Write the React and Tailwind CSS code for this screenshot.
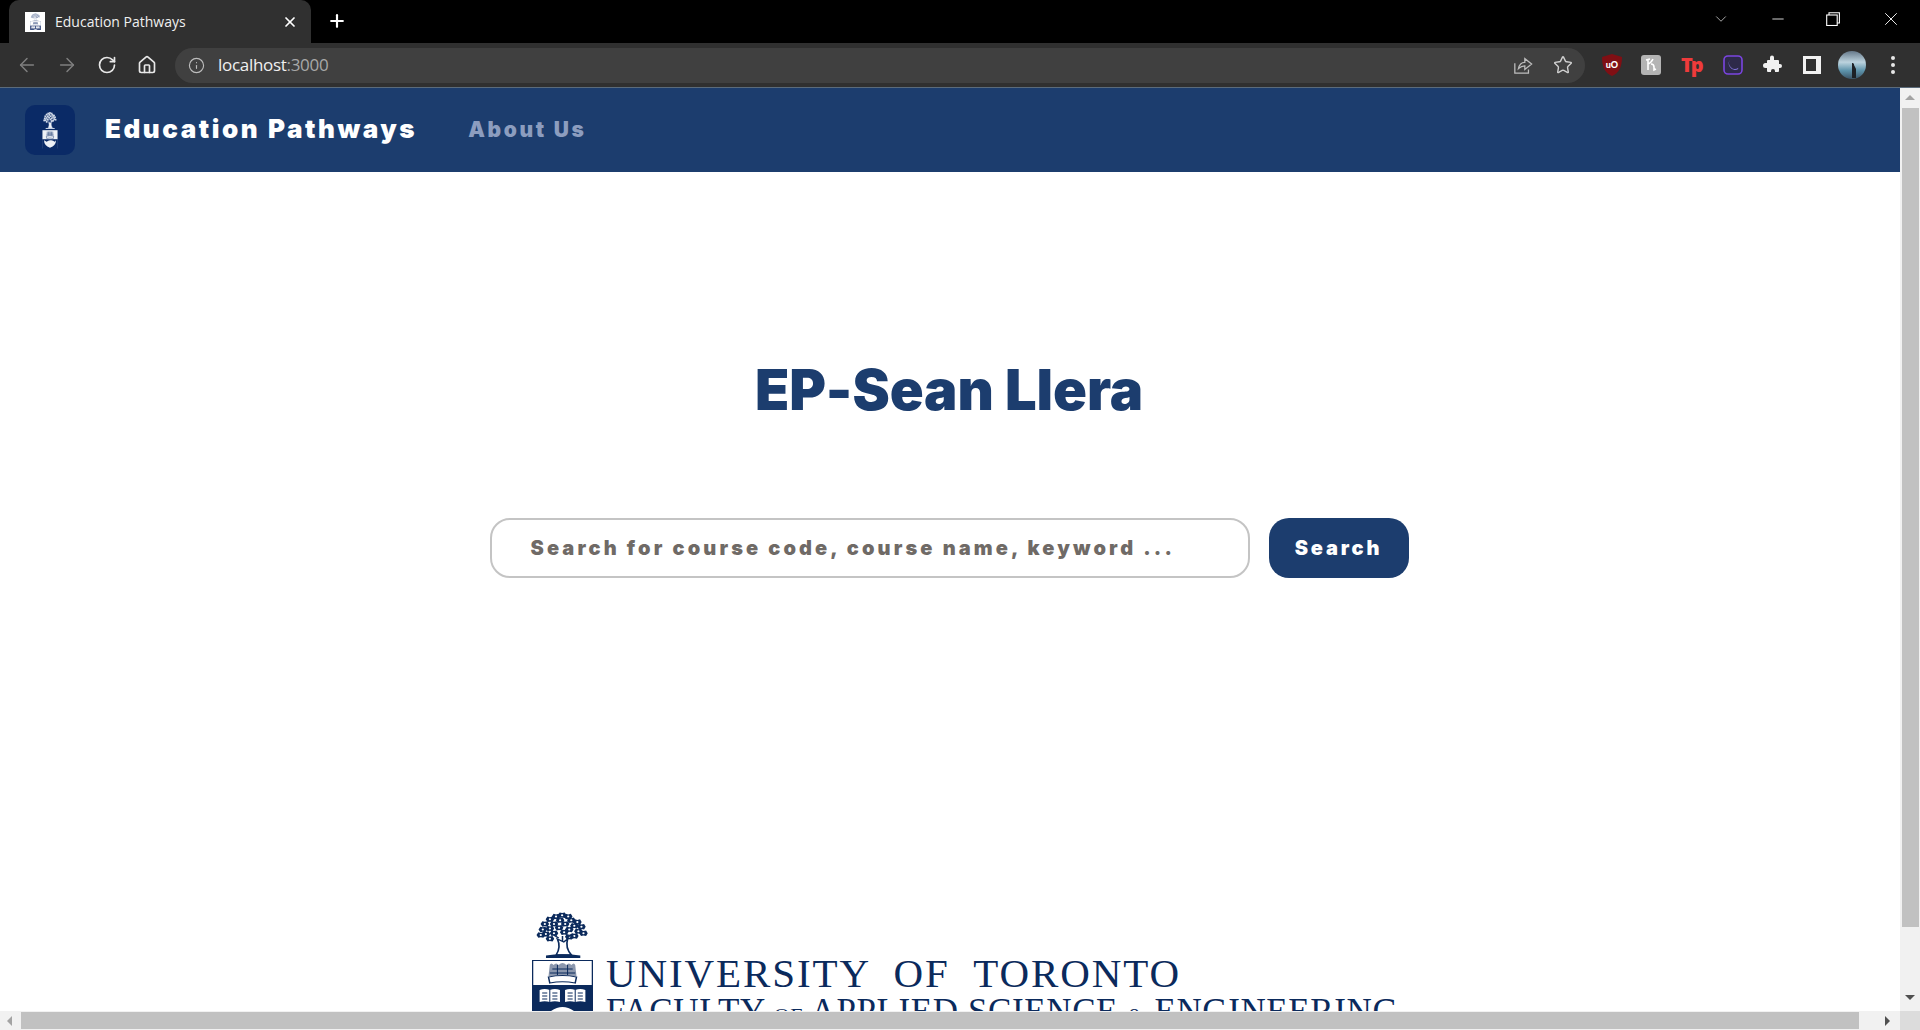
import React from "react";
import { ArrowLeft, ArrowRight, RotateCw, Home, Info, Star, X, Plus, ChevronDown, Minus } from "lucide-react";

function Crest({ tree = "#0b2a5c", top = "#ffffff", bottom = "#0b2a5c", line = "#0b2a5c", mid = "#8b97ad", emblem = "books", className = "" }) {
  const leaves = [[24,3.5],[18,5],[30,5],[12,8],[22,9],[33,9],[39,11],[7,13],[16,13],[27,13],[36,15],[43,16],[5,19],[12,18],[21,17],[31,19],[40,21],[8,24],[16,23],[26,22],[36,26],[45,23],[3,25],[12,29],[31,27]];
  return (
    <svg viewBox="0 0 48 101" preserveAspectRatio="none" className={className}>
      <g transform="translate(4.5 2) scale(0.8 0.92)">
        {leaves.map(([x, y], i) => (
          <g key={i}>
            <path d={`M${x - 4.2} ${y} l1.8 -3 l2.4 0.7 l2.6 -0.7 l1.6 3 l-1.6 3 l-2.6 -0.5 l-2.4 0.5 Z`} fill={tree} />
            <circle cx={x} cy={y} r="1.1" fill={top} />
          </g>
        ))}
      </g>
      <path d="M21 28 L17 25 M27 28 L32 24 M24 26 V31" stroke={tree} strokeWidth="1.2" fill="none" />
      <path d="M20 29 Q23 37 19 45 H31 Q26 38 28 29 L25 32 Z" fill={top} stroke={tree} strokeWidth="1.3" />
      <path d="M11 45.5 Q24 43 38 45.5 V48 H11 Z" fill={tree} />
      <rect x="0.5" y="50.5" width="47" height="50" fill={top} stroke={line} />
      <rect x="0.5" y="75" width="47" height="26" fill={bottom} />
      <path d="M14 55 Q15 52 17 55 Q19 52 21 55 Q24 51 27 55 Q29 52 31 55 Q33 52 34 55 L35 66 H13 Z" fill={mid} />
      <path d="M14 63 H34 M16 59 H32 M20 55 V65 M28 55 V65" stroke={line} strokeWidth="0.8" />
      <path d="M13 67 Q24 64 35 67 L34 73 Q24 70.5 14 73 Z" fill={top} stroke={line} strokeWidth="1.2" />
      {emblem === "books" ? (
        <>
          <path d="M6 80 Q10 78 14 80 Q18 78 22 80 V92 Q18 90.5 14 92 Q10 90.5 6 92 Z M26 80 Q30 78 34 80 Q38 78 42 80 V92 Q38 90.5 34 92 Q30 90.5 26 92 Z" fill={top} />
          <path d="M14 80 V92 M8 83 H12 M8 86 H12 M8 89 H12 M16 83 H20 M16 86 H20 M16 89 H20 M34 80 V92 M28 83 H32 M28 86 H32 M28 89 H32 M36 83 H40 M36 86 H40 M36 89 H40" stroke={line} strokeWidth="0.8" />
          <path d="M15 101 Q24 93 33 101 Z" fill={top} />
        </>
      ) : (
        <path d="M6 78 Q6 92 24 98 Q42 92 42 78 L38 82 Q34 78 28 78 Q20 76 14 82 Z" fill={top} />
      )}
    </svg>
  );
}

function Nav() {
  return (
    <nav className="flex h-[84px] shrink-0 items-center bg-[#1c3d6e] pl-[25px]">
      <div className="flex h-[50px] w-[50px] items-center justify-center rounded-[10px] bg-[#0a2a66]">
        <Crest tree="#c5d0e2" top="#eef1f6" bottom="#0a2a66" line="#0a2a66" mid="#aab6cc" emblem="hands" className="h-[38px] w-[16px]" />
      </div>
      <span className="ml-[30px] mt-[-3px] whitespace-nowrap text-[26px] font-black tracking-[2.55px] text-white">Education Pathways</span>
      <span className="ml-[51px] whitespace-nowrap text-[21px] font-black tracking-[2.65px] text-[#8c9dbf]">About Us</span>
    </nav>
  );
}

function Page() {
  return (
    <main className="flex min-h-0 flex-1 flex-col overflow-hidden bg-white">
      <Nav />
      <div className="mr-[2px] flex flex-col items-center">
        <h1 className="mt-[184px] text-[56px] font-black leading-[68px] tracking-[-0.05px] text-[#1c3d6e]">EP-Sean Llera</h1>
        <div className="mt-[94px] flex gap-[19px]">
          <div className="flex h-[60px] w-[760px] items-center rounded-[20px] border-2 border-[#c4c4c4] pl-[39px]">
            <span className="whitespace-nowrap text-[20px] font-black tracking-[3.1px] text-[#6f6a66]">Search for course code, course name, keyword ...</span>
          </div>
          <button className="h-[60px] w-[140px] rounded-[20px] bg-[#1c3d6e] text-[20px] font-black tracking-[2.8px] text-white">Search</button>
        </div>
      </div>
      <div className="ml-[532px] mt-[332px] flex h-[200px] items-start">
        <Crest className="h-[101px] w-[61px]" />
        <div className="ml-[13px] mt-[42px] font-['Liberation_Serif',serif] text-[#0b2a5c]">
          <div className="whitespace-nowrap text-[41px] leading-[42px] tracking-[1.9px] [word-spacing:12px]">UNIVERSITY OF TORONTO</div>
          <div className="mt-[-2px] whitespace-nowrap text-[35px] leading-[40px] tracking-[0.6px]">FACULTY <span className="text-[22px]">OF</span> APPLIED SCIENCE <span className="text-[22px]">&amp;</span> ENGINEERING</div>
        </div>
      </div>
    </main>
  );
}

function ExtIcons() {
  return (
    <div className="flex items-center">
      <svg viewBox="0 0 24 24" className="h-[24px] w-[24px]">
        <path d="M12 1 L22 4 C22 14 19 20 12 23 C5 20 2 14 2 4 Z" fill="#800f14" />
        <text x="12" y="15" textAnchor="middle" fontSize="9" fontWeight="900" fill="#fff" fontFamily="Lato, sans-serif">uO</text>
      </svg>
      <svg viewBox="0 0 20 20" className="ml-[17px] h-[20px] w-[20px]">
        <rect width="20" height="20" rx="3" fill="#b4b4b4" />
        <path d="M7 4 V15 M7 9 Q10 8 12 4 M5 5 L9 4 M10 9 Q13 9 13 12 V15 L15 14" stroke="#fff" strokeWidth="1.6" fill="none" />
      </svg>
      <span className="ml-[20px] text-[20px] font-black leading-none tracking-[-2px] text-[#ee3b3b]">Tp</span>
      <svg viewBox="0 0 20 20" className="ml-[21px] h-[20px] w-[20px]">
        <rect x="1" y="1" width="18" height="18" rx="4" fill="#2e2a4a" stroke="#7b45e0" strokeWidth="1.6" />
        <path d="M14.5 14.5 A6.5 6.5 0 0 1 7.5 4 A6 6 0 0 0 15.5 12.8 Q15 14 14.5 14.5 Z" fill="#8a7ae8" />
      </svg>
      <svg viewBox="0 0 20 20" className="ml-[19px] h-[20px] w-[20px]" fill="#f1f1f1">
        <path d="M8 2.5 a2 2 0 0 1 4 0 V5 h4 a1 1 0 0 1 1 1 v3 h1 a2 2 0 0 1 0 4 h-1 v3 a1 1 0 0 1 -1 1 h-3 v-1 a2 2 0 0 0 -4 0 v1 H6 a1 1 0 0 1 -1 -1 v-3 H3.5 a2.5 2.5 0 0 1 0 -5 H5 V6 a1 1 0 0 1 1 -1 h2 Z" />
      </svg>
      <div className="ml-[21px] flex h-[18px] w-[18px] justify-end border-[3px] border-[#f1f1f1] border-l-[2px] bg-[#f1f1f1]">
        <div className="h-full w-[10px] translate-x-[-2px] bg-[#303030]" />
      </div>
      <svg viewBox="0 0 28 28" className="ml-[17px] h-[28px] w-[28px]">
        <defs>
          <linearGradient id="av" x1="0" y1="0" x2="0" y2="1">
            <stop offset="0" stopColor="#66798a" />
            <stop offset="0.4" stopColor="#bcd3de" />
            <stop offset="0.7" stopColor="#5d93ab" />
            <stop offset="1" stopColor="#3c5568" />
          </linearGradient>
        </defs>
        <circle cx="14" cy="14" r="14" fill="url(#av)" />
        <path d="M14 12 a1.6 1.6 0 0 1 2 2 L18 18 V27 H14 Z" fill="#1d2126" />
      </svg>
      <div className="ml-[25px] flex flex-col gap-[3px]">
        <span className="h-[4px] w-[4px] rounded-full bg-[#e8e8e8]" />
        <span className="h-[4px] w-[4px] rounded-full bg-[#e8e8e8]" />
        <span className="h-[4px] w-[4px] rounded-full bg-[#e8e8e8]" />
      </div>
    </div>
  );
}

function Browser() {
  return (
    <>
      <div className="flex h-[43px] shrink-0 items-end bg-black pl-[9px] font-['Open_Sans',sans-serif]">
        <div className="flex h-[43px] w-[302px] items-center rounded-t-[10px] bg-[#303030] pl-[16px] pr-[13px]">
          <div className="flex h-[20px] w-[20px] items-center justify-center bg-white">
            <Crest tree="#8896b3" top="#ffffff" bottom="#3c4f80" line="#7585a8" mid="#9aa6bf" className="h-[17px] w-[11px]" />
          </div>
          <span className="ml-[10px] mt-[-1px] flex-1 whitespace-nowrap text-[14px] text-[#efefef]">Education Pathways</span>
          <X size={16} strokeWidth={2.6} className="text-white" />
        </div>
        <Plus size={20} strokeWidth={2.6} className="mb-[12px] ml-[16px] text-white" />
        <div className="mb-[13px] ml-auto flex items-center pr-[18px] text-white">
          <ChevronDown size={18} strokeWidth={1} className="mr-[39px] text-[#dddddd]" />
          <Minus size={18} strokeWidth={1.1} className="mr-[39px]" />
          <svg viewBox="0 0 14 14" className="mr-[40px] h-[14px] w-[14px]" fill="none" stroke="#fff" strokeWidth="1.1"><rect x="0.7" y="3" width="10.5" height="10.5" /><path d="M3 3 V0.7 H13.4 V11 H11.2" /></svg>
          <X size={22} strokeWidth={1} />
        </div>
      </div>
      <div className="flex h-[45px] shrink-0 items-center border-b border-[#5b6b7b] bg-[#303030] pl-[16px] pr-[15px] font-['Open_Sans',sans-serif]">
        <ArrowLeft size={22} strokeWidth={1.6} className="text-[#7f7f7f]" />
        <ArrowRight size={22} strokeWidth={1.6} className="ml-[18px] text-[#7f7f7f]" />
        <RotateCw size={20} strokeWidth={2} className="ml-[19px] text-[#e8e8e8]" />
        <Home size={20} strokeWidth={2} className="ml-[20px] text-[#e8e8e8]" />
        <div className="ml-[18px] flex h-[35px] w-[1410px] items-center rounded-full bg-[#404040] pl-[13px] pr-[12px]">
          <Info size={17} strokeWidth={1.6} className="text-[#bdbdbd]" />
          <span className="ml-[13px] flex-1 whitespace-nowrap text-[17px] tracking-[-0.3px] text-[#f0f0f0]">localhost<span className="text-[#a8a8a8]">:3000</span></span>
          <svg viewBox="0 0 22 22" className="h-[20px] w-[20px]" fill="none" stroke="#bdbdbd" strokeWidth="1.4"><path d="M2 9 V20 H17 V16" /><path d="M6 15 C7 10 10 8 13 8 V4 L20.5 10 L13 16 V12 C10 12 8 13 6 15 Z" /></svg>
          <Star size={20} strokeWidth={1.7} className="ml-[20px] text-[#cfcfcf]" />
        </div>
        <div className="ml-[15px]"><ExtIcons /></div>
      </div>
    </>
  );
}

function VerticalBar() {
  return (
    <div className="flex w-[20px] shrink-0 flex-col items-center bg-[#f1f1f1]">
      <div className="mt-[7px] h-0 w-0 border-x-[5px] border-b-[5px] border-x-transparent border-b-[#a3a3a3]" />
      <div className="mt-[8px] h-[819px] w-[17px] bg-[#c1c1c1]" />
      <div className="mt-[68px] h-0 w-0 border-x-[5px] border-t-[5px] border-x-transparent border-t-[#505050]" />
    </div>
  );
}

function HorizontalBar() {
  return (
    <div className="flex h-[19px] shrink-0 items-center bg-[#f1f1f1]">
      <div className="ml-[7px] h-0 w-0 border-y-[5px] border-r-[5px] border-y-transparent border-r-[#a3a3a3]" />
      <div className="ml-[9px] h-[17px] w-[1838px] bg-[#c1c1c1]" />
      <div className="ml-[26px] h-0 w-0 border-y-[5px] border-l-[5px] border-y-transparent border-l-[#505050]" />
      <div className="ml-auto h-full w-[20px] bg-[#dcdcdc]" />
    </div>
  );
}

export default function App() {
  return (
    <div className="flex h-[1030px] w-[1920px] flex-col overflow-hidden bg-white font-['Inter',sans-serif]">
      <Browser />
      <div className="flex min-h-0 flex-1">
        <Page />
        <VerticalBar />
      </div>
      <HorizontalBar />
    </div>
  );
}
